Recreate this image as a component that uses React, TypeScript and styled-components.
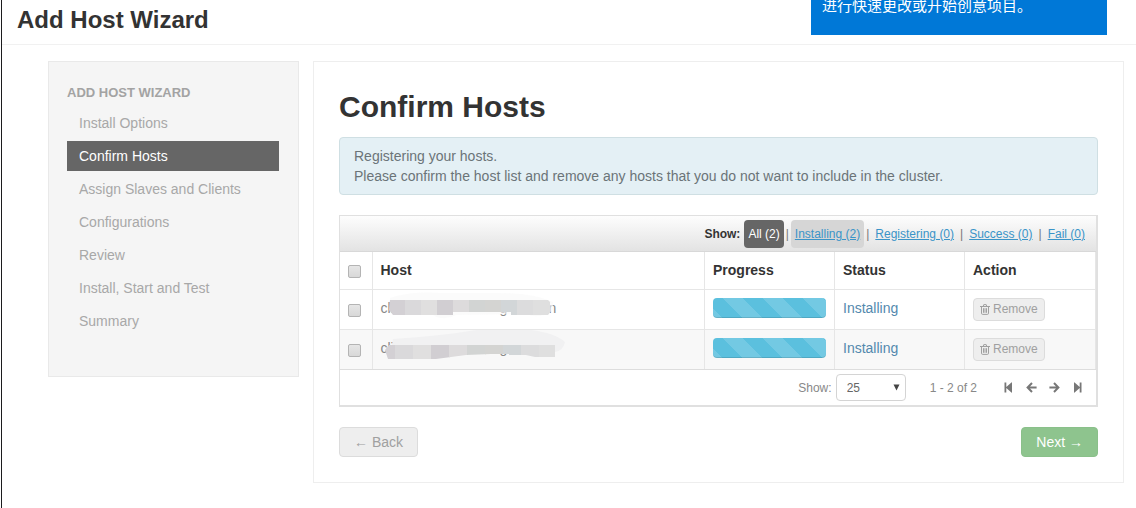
import React from "react";
import styled, { createGlobalStyle } from "styled-components";

const GlobalStyle = createGlobalStyle`
  *, *::before, *::after { box-sizing: border-box; }
  body {
    margin: 0;
    background: #fff;
    color: #333;
    font-family: "Liberation Sans", Arial, sans-serif;
    font-size: 14px;
    line-height: 20px;
  }
  button, select, input { font-family: inherit; margin: 0; }
`;

const Page = styled.div`
  position: relative;
  min-height: 100vh;
  margin-left: 1px;
  border-left: 1px solid #1c1c1e;
`;

const Toast = styled.aside`
  position: absolute;
  top: 0;
  right: 29px;
  width: 296px;
  height: 35px;
  padding: 0 11px;
  overflow: hidden;
  display: flex;
  align-items: flex-end;
  background: #0078d7;
  color: #fff;
  font: 15px/20px "Noto Sans CJK SC", sans-serif;
`;

const ToastText = styled.p`
  margin: 0 0 20px;
  white-space: nowrap;
`;

const Header = styled.header`
  height: 45px;
  padding: 4px 15px 0;
  border-bottom: 1px solid #f1f1f1;
`;

const PageTitle = styled.h1`
  margin: 0;
  font-size: 24px;
  line-height: 32px;
`;

const Body = styled.div`
  display: flex;
  align-items: flex-start;
  gap: 14px;
  padding: 16px 12px 24px 46px;
`;

const Sidebar = styled.nav`
  flex: 0 0 251px;
  padding: 21px 19px 40px 18px;
  border: 1px solid #e9e9e9;
  background: #f5f5f5;
`;

const SidebarTitle = styled.h2`
  margin: 0 0 5px;
  font-size: 13px;
  line-height: 20px;
  color: #a3a3a3;
  text-transform: uppercase;
`;

const StepList = styled.ul`
  display: flex;
  flex-direction: column;
  gap: 3px;
  margin: 0;
  padding: 0;
  list-style: none;
`;

const StepLink = styled.a<{ $active?: boolean }>`
  display: block;
  padding: 5px 12px;
  color: ${(p) => (p.$active ? "#fff" : "#a8a8a8")};
  background: ${(p) => (p.$active ? "#666" : "transparent")};
  text-decoration: none;
`;

const Main = styled.main`
  flex: 1;
  min-width: 0;
  padding: 25px;
  border: 1px solid #eee;
`;

const Heading = styled.h2`
  margin: 0 0 10px;
  font-size: 30px;
  line-height: 40px;
`;

const Notice = styled.div`
  margin-bottom: 20px;
  padding: 8px 14px;
  border: 1px solid #cfdfe3;
  border-radius: 4px;
  background: #e4f0f5;
  color: #6b7478;
`;

const Line = styled.p`
  margin: 0;
`;

const Panel = styled.section`
  border: 2px solid #e0e0e0;
  border-left-width: 1px;
  border-top-width: 1px;
`;

const FilterBar = styled.div`
  display: flex;
  justify-content: flex-end;
  align-items: center;
  height: 36px;
  padding-right: 5px;
  border-bottom: 1px solid #d8d8d8;
  background: linear-gradient(#fdfdfd, #e3e3e3);
  font-size: 12px;
`;

const FilterLabel = styled.strong`
  margin-right: 2px;
`;

const Separator = styled.span`
  color: #777;
`;

const FilterLink = styled.a<{ $tone?: "active" | "hover" }>`
  margin: 0 ${(p) => (p.$tone ? 2 : 3)}px;
  padding: 4px ${(p) => (p.$tone ? 4 : 3)}px;
  border-radius: 4px;
  color: ${(p) => (p.$tone === "active" ? "#fff" : "#3a94c8")};
  background: ${(p) =>
    p.$tone === "active" ? "#666" : p.$tone === "hover" ? "#d6d6d6" : "transparent"};
  text-decoration: ${(p) => (p.$tone === "active" ? "none" : "underline")};
`;

const HostTable = styled.table`
  width: 100%;
  table-layout: fixed;
  border-collapse: collapse;
`;

const Col = styled.col<{ $w?: number }>`
  width: ${(p) => (p.$w ? `${p.$w}px` : "auto")};
`;

const HeadCell = styled.th`
  height: 37px;
  padding: 0 8px;
  text-align: left;
  border-right: 1px solid #e6e6e6;
`;

const Row = styled.tr<{ $striped?: boolean }>`
  background: ${(p) => (p.$striped ? "#f8f8f8" : "#fff")};
`;

const Cell = styled.td`
  height: 40px;
  padding: 8px 8px 0;
  vertical-align: top;
  border-top: 1px solid #e6e6e6;
  border-right: 1px solid #e6e6e6;
`;

const Check = styled.input`
  appearance: none;
  display: block;
  width: 13px;
  height: 13px;
  margin-top: 3px;
  border: 1px solid #b4b4b4;
  border-radius: 2px;
  background: linear-gradient(#e6e6e6, #d8d8d8);
`;

const HostCheck = styled(Check)`
  margin-top: 6px;
`;

const HostName = styled.div`
  position: relative;
  display: grid;
  grid-template-columns: 119px 49px auto;
  color: #888;
`;

const Mosaic = styled.svg`
  position: absolute;
  left: 0;
  top: -8px;
`;

const Progress = styled.div`
  height: 20px;
  border-radius: 4px;
  background-color: #5bc0de;
  background-image: linear-gradient(
    45deg,
    rgba(255, 255, 255, 0.15) 25%,
    transparent 25%,
    transparent 50%,
    rgba(255, 255, 255, 0.15) 50%,
    rgba(255, 255, 255, 0.15) 75%,
    transparent 75%
  );
  background-size: 40px 40px;
  background-position: 10px 0;
  box-shadow: inset 0 -1px 0 rgba(0, 0, 0, 0.12);
`;

const StatusLink = styled.a`
  color: #5389ae;
  text-decoration: none;
`;

const Button = styled.button<{ $kind?: "small" | "primary" }>`
  display: inline-flex;
  align-items: center;
  gap: 3px;
  height: ${(p) => (p.$kind === "small" ? 23 : 30)}px;
  padding: 0 ${(p) => (p.$kind === "small" ? 6 : 14)}px;
  border: 1px solid ${(p) => (p.$kind === "primary" ? "#8ac08a" : "#dcdcdc")};
  border-radius: 4px;
  background: ${(p) => (p.$kind === "primary" ? "#8ec48e" : "#eee")};
  color: ${(p) => (p.$kind === "primary" ? "#fff" : "#a0a0a0")};
  font-size: ${(p) => (p.$kind === "small" ? 12 : 14)}px;
`;

const Pager = styled.div`
  display: flex;
  justify-content: flex-end;
  align-items: center;
  height: 36px;
  padding-right: 11px;
  border-top: 1px solid #ddd;
  color: #888;
  font-size: 12px;
`;

const SizeLabel = styled.label`
  display: flex;
  align-items: center;
  gap: 4px;
`;

const SelectBox = styled.span`
  position: relative;
  display: block;
`;

const Select = styled.select`
  appearance: none;
  display: block;
  width: 70px;
  height: 27px;
  padding: 0 10px;
  border: 1px solid #d4d4d4;
  border-radius: 4px;
  background: #fff;
  color: #666;
  font-size: 12px;
`;

const Caret = styled.svg`
  position: absolute;
  right: 6px;
  top: 10px;
  pointer-events: none;
`;

const Range = styled.span`
  margin: 0 24px;
`;

const PageButtons = styled.div`
  display: flex;
  gap: 8px;
`;

const IconButton = styled.button`
  display: flex;
  width: 15px;
  padding: 0;
  justify-content: center;
  border: 0;
  background: none;
  color: #777;
`;

const Footer = styled.footer`
  display: flex;
  justify-content: space-between;
  margin-top: 20px;
`;

const steps = [
  "Install Options",
  "Confirm Hosts",
  "Assign Slaves and Clients",
  "Configurations",
  "Review",
  "Install, Start and Test",
  "Summary",
];

const filters = ["Registering (0)", "Success (0)", "Fail (0)"];

const tileColors = [
  "#d3d0d4", "#dad9db", "#e0dfdf", "#d1ced2", "#dddbdc",
  "#d2d4d3", "#d4d4d2", "#d2d6d8", "#dcdcdd", "#dfdfdf",
];

const FirstMosaic = () => (
  <Mosaic width="190" height="38" viewBox="0 0 190 38" aria-hidden="true">
    <path d="M9 8Q30 1 60 3H110Q150 2 172 12V20Q160 30 145 24L75 25Q62 32 50 24L10 20Z" fill="#f9f9f9" opacity=".6" />
    <clipPath id="tiles-a">
      <path d="M9 10H167L171 14V20L167 25H130V22H72V25H12L8 20Z" />
    </clipPath>
    <g clipPath="url(#tiles-a)">
      {tileColors.map((c, i) => (
        <rect key={i} x={i * 16 + 8} y="8" width="17" height="20" fill={c} />
      ))}
    </g>
  </Mosaic>
);

const SecondMosaic = () => (
  <Mosaic width="190" height="38" viewBox="0 0 190 38" aria-hidden="true">
    <path d="M12 9Q60 6 95 0H150Q174 3 184 12Q182 21 174 22H10Z" fill="#f1f1f2" />
    <clipPath id="tiles-b">
      <path d="M4 20L8 15H174V27H154L145 25H128V24H110L85 25L55 29H7Z" />
    </clipPath>
    <g clipPath="url(#tiles-b)">
      {tileColors.map((c, i) => (
        <rect key={i} x={i * 18 - 4} y="12" width="19" height="20" fill={c} />
      ))}
    </g>
  </Mosaic>
);

const TrashIcon = () => (
  <svg width="10" height="11" viewBox="0 0 10 11" fill="none" stroke="currentColor" aria-hidden="true">
    <path d="M0 2.5H10M3.2 2.3L3.8.6H6.2L6.8 2.3M1.5 3V9.2Q1.5 10.4 2.6 10.4H7.4Q8.5 10.4 8.5 9.2V3M3.5 4.2V8.8M5 4.2V8.8M6.5 4.2V8.8" />
  </svg>
);

const StepIcon = ({ flip }: { flip?: boolean }) => (
  <svg width="9" height="11" viewBox="0 0 9 11" fill="currentColor" aria-hidden="true">
    <path
      transform={flip ? "translate(9 0) scale(-1 1)" : undefined}
      d="M.5.5H2.3V5L7.4.4Q8 0 8 .8V10.2Q8 11 7.4 10.6L2.3 6V10.5H.5Z"
    />
  </svg>
);

const ArrowIcon = ({ flip }: { flip?: boolean }) => (
  <svg width="11" height="11" viewBox="0 0 11 11" fill="none" stroke="currentColor" strokeWidth="2" aria-hidden="true">
    <path transform={flip ? "translate(11 0) scale(-1 1)" : undefined} d="M6 1L1.6 5.5 6 10M1.8 5.5H10.6" />
  </svg>
);

const hosts = [
  { id: 1, prefix: "cli", middle: "g", suffix: "n", Mask: FirstMosaic },
  { id: 2, prefix: "cli", middle: "g", suffix: "", Mask: SecondMosaic },
];

export default function App() {
  return (
    <>
      <GlobalStyle />
      <Page>
        <Header>
          <PageTitle>Add Host Wizard</PageTitle>
        </Header>
        <Toast>
          <ToastText lang="zh-CN">进行快速更改或开始创意项目。</ToastText>
        </Toast>
        <Body>
          <Sidebar>
            <SidebarTitle>Add Host Wizard</SidebarTitle>
            <StepList>
              {steps.map((s, i) => (
                <li key={s}>
                  <StepLink href="#" $active={i === 1}>{s}</StepLink>
                </li>
              ))}
            </StepList>
          </Sidebar>
          <Main>
            <Heading>Confirm Hosts</Heading>
            <Notice>
              <Line>Registering your hosts.</Line>
              <Line>Please confirm the host list and remove any hosts that you do not want to include in the cluster.</Line>
            </Notice>
            <Panel>
              <FilterBar>
                <FilterLabel>Show:</FilterLabel>
                <FilterLink href="#" $tone="active">All (2)</FilterLink>
                <Separator>|</Separator>
                <FilterLink href="#" $tone="hover">Installing (2)</FilterLink>
                {filters.map((f) => (
                  <React.Fragment key={f}>
                    <Separator>|</Separator>
                    <FilterLink href="#">{f}</FilterLink>
                  </React.Fragment>
                ))}
              </FilterBar>
              <HostTable>
                <colgroup>
                  <Col $w={32} />
                  <Col />
                  <Col $w={130} />
                  <Col $w={130} />
                  <Col $w={131} />
                </colgroup>
                <thead>
                  <tr>
                    <HeadCell><Check type="checkbox" aria-label="Select all hosts" /></HeadCell>
                    <HeadCell>Host</HeadCell>
                    <HeadCell>Progress</HeadCell>
                    <HeadCell>Status</HeadCell>
                    <HeadCell>Action</HeadCell>
                  </tr>
                </thead>
                <tbody>
                  {hosts.map(({ id, prefix, middle, suffix, Mask }, i) => (
                    <Row key={id} $striped={i === 1}>
                      <Cell><HostCheck type="checkbox" aria-label="Select host" /></Cell>
                      <Cell>
                        <HostName>
                          <span>{prefix}</span>
                          <span>{middle}</span>
                          <span>{suffix}</span>
                          <Mask />
                        </HostName>
                      </Cell>
                      <Cell><Progress role="progressbar" aria-label="Installing" /></Cell>
                      <Cell><StatusLink href="#">Installing</StatusLink></Cell>
                      <Cell><Button type="button" $kind="small"><TrashIcon />Remove</Button></Cell>
                    </Row>
                  ))}
                </tbody>
              </HostTable>
              <Pager>
                <SizeLabel>
                  Show:
                  <SelectBox>
                    <Select defaultValue="25">
                      <option>25</option>
                    </Select>
                    <Caret width="7" height="7" viewBox="0 0 7 7" aria-hidden="true">
                      <path d="M.5.5H6.5L3.5 6.5Z" fill="#444" />
                    </Caret>
                  </SelectBox>
                </SizeLabel>
                <Range>1 - 2 of 2</Range>
                <PageButtons>
                  <IconButton type="button" aria-label="First page"><StepIcon /></IconButton>
                  <IconButton type="button" aria-label="Previous page"><ArrowIcon /></IconButton>
                  <IconButton type="button" aria-label="Next page"><ArrowIcon flip /></IconButton>
                  <IconButton type="button" aria-label="Last page"><StepIcon flip /></IconButton>
                </PageButtons>
              </Pager>
            </Panel>
            <Footer>
              <Button type="button">← Back</Button>
              <Button type="button" $kind="primary">Next →</Button>
            </Footer>
          </Main>
        </Body>
      </Page>
    </>
  );
}
